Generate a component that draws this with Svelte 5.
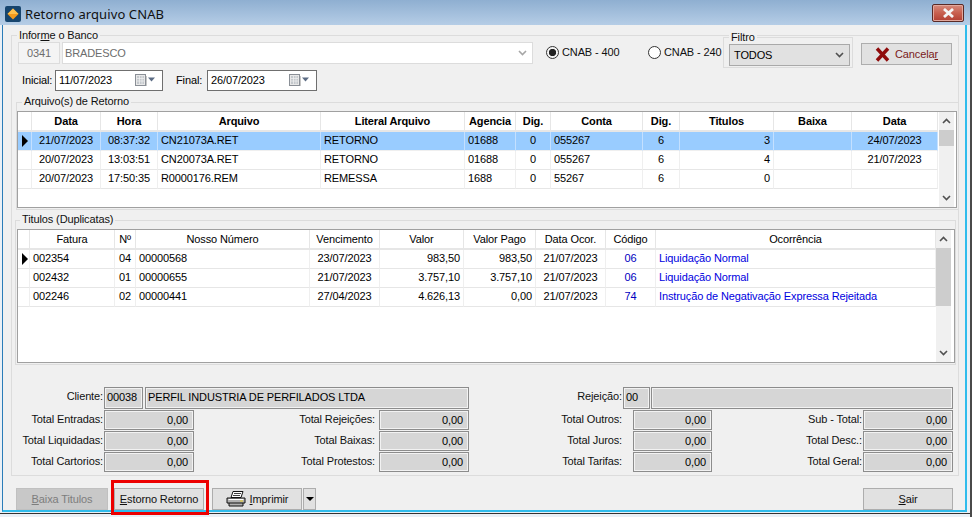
<script>
  const g1cols = [14, 69, 57, 163, 144, 51, 35, 92, 37, 94, 78, 86];
  const g1head = ['', 'Data', 'Hora', 'Arquivo', 'Literal Arquivo', 'Agencia', 'Dig.', 'Conta', 'Dig.', 'Titulos', 'Baixa', 'Data'];
  const g1align = ['', 'c', 'c', 'l', 'l', 'l', 'c', 'l', 'c', 'r', 'l', 'c'];
  const g1rows = [
    ['', '21/07/2023', '08:37:32', 'CN21073A.RET', 'RETORNO', '01688', '0', '055267', '6', '3', '', '24/07/2023'],
    ['', '20/07/2023', '13:03:51', 'CN20073A.RET', 'RETORNO', '01688', '0', '055267', '6', '4', '', '21/07/2023'],
    ['', '20/07/2023', '17:50:35', 'R0000176.REM', 'REMESSA', '1688', '0', '55267', '6', '0', '', '']
  ];
  const g2cols = [12, 85, 21, 174, 70, 84, 72, 70, 50, 280];
  const g2head = ['', 'Fatura', 'Nº', 'Nosso Número', 'Vencimento', 'Valor', 'Valor Pago', 'Data Ocor.', 'Código', 'Ocorrência'];
  const g2align = ['', 'l', 'c', 'l', 'c', 'r', 'r', 'c', 'c', 'o'];
  const g2rows = [
    ['', '002354', '04', '00000568', '23/07/2023', '983,50', '983,50', '21/07/2023', '06', 'Liquidação Normal'],
    ['', '002432', '01', '00000655', '21/07/2023', '3.757,10', '3.757,10', '21/07/2023', '06', 'Liquidação Normal'],
    ['', '002246', '02', '00000441', '27/04/2023', '4.626,13', '0,00', '21/07/2023', '74', 'Instrução de Negativação Expressa Rejeitada']
  ];
  const totals = [
    ['Total Entradas:', 'Total Rejeições:', 'Total Outros:', 'Sub - Total:'],
    ['Total Liquidadas:', 'Total Baixas:', 'Total Juros:', 'Total Desc.:'],
    ['Total Cartorios:', 'Total Protestos:', 'Total Tarifas:', 'Total Geral:']
  ];
</script>

{#snippet chevUp()}
  <svg width="9" height="6" viewBox="0 0 9 6"><path d="M1 5 L4.5 1.5 L8 5" fill="none" stroke="#505050" stroke-width="1.6"/></svg>
{/snippet}
{#snippet chevDown()}
  <svg width="9" height="6" viewBox="0 0 9 6"><path d="M1 1 L4.5 4.5 L8 1" fill="none" stroke="#505050" stroke-width="1.6"/></svg>
{/snippet}
{#snippet calendar()}
  <span class="cal">
    <svg width="26" height="13" viewBox="0 0 26 13">
      <rect x="0.5" y="0.5" width="10" height="11" fill="#e8e8e8" stroke="#8a8f96"/>
      <rect x="2" y="2" width="7" height="8" fill="#c4c8cc"/>
      <path d="M2 4.5H9M2 7H9M4.5 2V10M7 2V10" stroke="#f2f2f2" stroke-width="0.7"/>
      <rect x="11" y="2" width="1" height="10" fill="#c8c8c8"/>
      <path d="M13 3.5H20L16.5 7.5Z" fill="#5c6c84"/>
    </svg>
  </span>
{/snippet}
{#snippet grid(cols, head, align, rows, cls)}
  <table class={cls}>
    <colgroup>
      {#each cols as w}<col style="width:{w}px" />{/each}
    </colgroup>
    <thead>
      <tr>{#each head as h}<th>{h}</th>{/each}</tr>
    </thead>
    <tbody>
      {#each rows as r, i}
        <tr class:sel={i === 0 && cls === 'arq'}>
          {#each r as c, j}
            <td class={align[j]}>
              {#if j === 0 && i === 0}<span class="ptr"></span>{/if}{c}
            </td>
          {/each}
        </tr>
      {/each}
    </tbody>
  </table>
{/snippet}

<div class="win">
  <header class="title">
    <span class="appicon">
      <svg width="16" height="16" viewBox="0 0 16 16">
        <rect width="16" height="16" rx="2" fill="#17456e"/>
        <path d="M8 2.5 L13.5 8 L8 13.5 L2.5 8Z" fill="#f59b1c"/>
        <path d="M8 2.5 L13.5 8 L2.5 8Z" fill="#ffc04d"/>
      </svg>
    </span>
    <span class="ttext">Retorno arquivo CNAB</span>
    <button class="close" aria-label="Fechar">
      <svg width="15" height="10" viewBox="0 0 15 10"><path d="M3 1 L12 9 M12 1 L3 9" stroke="#f4f4f4" stroke-width="2.8"/></svg>
    </button>
  </header>

  <main class="client">
    <section class="outer">
      <div class="legend lg-bank">Infor<u>m</u>e o Banco</div>

      <div class="row-bank">
        <div class="box code">0341</div>
        <div class="box name">BRADESCO<span class="bchev">{@render chevDown()}</span></div>
        <label class="radio r400"><span class="dot on"></span>CNAB - 400</label>
        <label class="radio r240"><span class="dot"></span>CNAB - 240</label>
        <div class="filtro">
          <div class="legend lg-filtro">Filtro</div>
          <div class="select">TODOS{@render chevDown()}</div>
        </div>
        <button class="btn cancel">
          <svg width="15" height="15" viewBox="0 0 15 15"><path d="M2 1.5 L13 13.5 M13 1.5 L2 13.5" stroke="#8f0b0b" stroke-width="3.4"/></svg>
          <span>Cancela<u>r</u></span>
        </button>
      </div>

      <div class="row-dates">
        <span class="dl1">Inicial:</span>
        <div class="date d1">11/07/2023{@render calendar()}</div>
        <span class="dl2">Final:</span>
        <div class="date d2">26/07/2023{@render calendar()}</div>
      </div>

      <section class="group g-arq">
        <div class="legend lg-arq">Arquivo(s) de Retorno</div>
        <div class="gridbox gb1">
          {@render grid(g1cols, g1head, g1align, g1rows, 'arq')}
          <div class="sb">
            <span class="ar">{@render chevUp()}</span>
            <span class="thumb th1"></span>
            <span class="ar down">{@render chevDown()}</span>
          </div>
        </div>
      </section>

      <section class="group g-tit">
        <div class="legend lg-tit">Titulos (Duplicatas)</div>
        <div class="gridbox gb2">
          {@render grid(g2cols, g2head, g2align, g2rows, 'tit')}
          <div class="sb sb2">
            <span class="ar">{@render chevUp()}</span>
            <span class="thumb th2"></span>
            <span class="ar down">{@render chevDown()}</span>
          </div>
        </div>
      </section>

      <div class="summary">
        <div class="sumrow first">
          <span class="lb lb-a">Cliente:</span>
          <div class="fld f-code">00038</div>
          <div class="fld f-name">PERFIL INDUSTRIA DE PERFILADOS LTDA</div>
          <span class="lb lb-rej">Rejeição:</span>
          <div class="fld f-rej">00</div>
          <div class="fld f-rej2"></div>
        </div>
        {#each totals as t}
          <div class="sumrow">
            <span class="lb lb-a">{t[0]}</span>
            <div class="fld val">0,00</div>
            <span class="lb lb-b">{t[1]}</span>
            <div class="fld val">0,00</div>
            <span class="lb lb-c">{t[2]}</span>
            <div class="fld val vc">0,00</div>
            <span class="lb lb-d">{t[3]}</span>
            <div class="fld val">0,00</div>
          </div>
        {/each}
      </div>
    </section>

    <footer class="actions">
      <button class="btn baixa"><span><u>B</u>aixa Titulos</span></button>
      <button class="btn estorno"><span><u>E</u>storno Retorno</span><i class="mark"></i></button>
      <button class="btn imprimir">
        <svg width="20" height="16" viewBox="0 0 20 16">
          <path d="M7 0.5H17L15 6.5H5Z" fill="#fff" stroke="#111"/>
          <path d="M8 2.5H15M7 4.5H14" stroke="#111" stroke-width="0.8"/>
          <path d="M1 7H19V12H17V15H3V12H1Z" fill="#b0b0b0" stroke="#111"/>
          <path d="M2.5 8.5H17.5" stroke="#fff"/>
          <path d="M3 12H17" stroke="#111"/>
          <path d="M14 10H17" stroke="#e8d040" stroke-width="1.2"/>
        </svg>
        <span><u>I</u>mprimir</span>
      </button>
      <button class="btn drop" aria-label="Opções"><svg width="8" height="4" viewBox="0 0 8 4"><path d="M0 0H8L4 4Z" fill="#000"/></svg></button>
      <button class="btn sair"><span><u>S</u>air</span></button>
    </footer>
  </main>
  <div class="edge"></div>
</div>

<style>
  :global(body) { margin: 0; background: #e4e4e4; }
  :global(*) { box-sizing: border-box; }
  .win {
    width: 972px; height: 517px; overflow: hidden;
    font: 11px/13px "Liberation Sans", Arial, sans-serif; color: #000; letter-spacing: -0.12px;
    background: #eaf0f6;
    padding: 0 0 0 2px;
    display: flex; flex-direction: column;
    border-right: 2px solid #4a4a4a;
  }
  .title { height: 25px; flex: none; display: flex; align-items: center; margin: 0 0 0 -2px; padding: 0 6px 0 5px; background: linear-gradient(#8fafd1, #b5cde6); }
  .appicon { display: flex; margin-right: 4px; margin-top: 2px; }
  .ttext { font: 13px/18px "Noto Sans", sans-serif; letter-spacing: 0.1px; color: #111; margin-top: 2px; }
  .close { margin-left: auto; margin-top: 0; width: 32px; height: 18px; padding: 0; border: 1px solid #5a2a26; border-radius: 2px; background: linear-gradient(#d58a7c, #c8604f 50%, #b23f33); display: flex; align-items: center; justify-content: center; box-shadow: inset 0 0 0 1px #e2a89d; }

  .client { width: 965px; height: 487px; flex: none; background: #f0f0f0; border-bottom: 2px solid #2fbcec; border-left: 1px solid #2a7cb8; border-right: 2px solid #2fbcec; padding: 10px 0 0 8px; }
  .edge { height: 1px; margin: 1px 0 0 -2px; background: #333; }

  .outer { height: 441px; width: 948px; border: 1px solid #dcdcdc; }
  .legend { background: #f0f0f0; width: fit-content; padding: 0 2px; color: #111; height: 13px; }
  .lg-bank { margin: -7px 0 0 5px; }
  .row-bank { display: flex; align-items: flex-start; height: 27px; }
  .box { height: 22px; border: 1px solid #dcdcdc; background: #fff; color: #6d6d6d; line-height: 20px; }
  .code { width: 42px; margin-left: 6px; text-align: center; background: #f4f4f4; }
  .name { width: 471px; margin-left: 2px; padding-left: 2px; display: flex; justify-content: space-between; }
  .bchev { display: flex; padding: 7px 5px 0 0; opacity: .5; }
  .radio { display: flex; align-items: center; gap: 3px; margin-top: 3px; height: 14px; color: #111; white-space: nowrap; }
  .r400 { margin-left: 13px; width: 102px; }
  .r240 { width: 75px; }
  .dot { width: 13px; height: 13px; border: 1px solid #333; border-radius: 50%; background: #fff; flex: none; }
  .dot.on { background: radial-gradient(circle, #222 0 3.4px, #f4f4f4 3.9px); }
  .filtro { width: 130px; height: 31px; border: 1px solid #dcdcdc; margin: -5px 0 0 0; padding: 0 0 0 5px; }
  .lg-filtro { margin: -7px 0 0 0; }
  .select { width: 121px; height: 22px; border: 1px solid #a9a9a9; background: #e1e1e1; display: flex; justify-content: space-between; align-items: center; padding: 0 5px 0 4px; }
  .btn { font: inherit; letter-spacing: inherit; color: #111; background: #e1e1e1; border: 1px solid #adadad; padding: 0; display: flex; align-items: center; justify-content: center; height: 22px; }
  .cancel { width: 91px; margin: 1px 0 0 8px; gap: 5px; color: #7a1a1a; }

  .row-dates { display: flex; align-items: center; height: 22px; }
  .dl1 { margin-left: 10px; width: 33px; }
  .dl2 { margin-left: 13px; width: 31px; }
  .date { height: 21px; border: 1px solid #6f6f6f; background: #fff; line-height: 19px; padding: 0 1px 0 3px; display: flex; justify-content: space-between; }
  .d1 { width: 108px; }
  .d2 { width: 110px; }
  .cal { padding: 3px 0 0 0; }

  .group { border: 1px solid #dcdcdc; }
  .g-arq { margin: 11px 0 0 4px; width: 943px; height: 108px; }
  .lg-arq { margin: -8px 0 0 5px; }
  .g-tit { margin: 10px 0 0 3px; width: 941px; height: 145px; }
  .lg-tit { margin: -8px 0 0 4px; }
  .gridbox { background: #fff; border: 1px solid #a0a0a0; display: flex; overflow: hidden; }
  .gb1 { width: 940px; height: 97px; margin: 3px 0 0 0; }
  .gb2 { width: 938px; height: 134px; margin: 3px 0 0 1px; }
  table { border-collapse: separate; border-spacing: 0; table-layout: fixed; flex: none; align-self: flex-start; }
  .arq { width: 920px; }
  .tit { width: 918px; }
  th { height: 20px; padding: 0; font-weight: 700; text-align: center; border-right: 1px solid #e6e6e6; border-bottom: 2px solid #e6e6e6; overflow: hidden; white-space: nowrap; }
  .tit th { font-weight: 400; }
  td { height: 19px; padding: 0 3px; border-right: 1px solid #efefef; border-bottom: 1px solid #e6e6e6; overflow: hidden; white-space: nowrap; line-height: 16px; vertical-align: top; position: relative; }
  .c { text-align: center; }
  .r { text-align: right; }
  .l { text-align: left; }
  .o { text-align: left; color: #0000e0; }
  .tit td:nth-child(9) { color: #0000c0; }
  .sel td { background: #99ccff; border-bottom-color: #efefef; border-right-color: #c4e0ff; }
  .ptr { position: absolute; left: 4px; top: 3px; width: 0; height: 0; border-left: 6px solid #000; border-top: 6px solid transparent; border-bottom: 6px solid transparent; }
  .sb { width: 15px; margin-left: auto; margin-right: 2px; background: #f0f0f0; display: flex; flex-direction: column; }
  .sb2 { margin-right: 3px; }
  .ar { height: 18px; display: flex; align-items: center; justify-content: center; flex: none; }
  .down { margin-top: auto; }
  .thumb { background: #cdcdcd; flex: none; }
  .th1 { height: 16px; }
  .th2 { height: 58px; }

  .summary { margin-top: 22px; }
  .sumrow { display: flex; height: 20px; margin-bottom: 1px; }
  .sumrow.first { height: 22px; margin-bottom: 1px; }
  .lb { text-align: right; line-height: 18px; color: #111; white-space: nowrap; padding-right: 1px; }
  .lb-a { width: 92px; }
  .lb-b { width: 185px; padding-right: 4px; }
  .lb-c { width: 164px; padding-right: 11px; }
  .lb-d { width: 151px; }
  .lb-rej { width: 154px; }
  .fld { background: #d6d6d6; border: 1px solid #8c8c8c; box-shadow: inset 0 0 0 1px #f2f2f2; line-height: 19px; padding: 0 2px; white-space: nowrap; }
  .f-code { width: 39px; }
  .f-name { width: 324px; margin-left: 2px; }
  .f-rej { width: 27px; }
  .f-rej2 { width: 302px; margin-left: 1px; }
  .val { width: 90px; text-align: right; line-height: 19px; padding-right: 5px; }
  .vc { width: 79px; }

  .actions { display: flex; margin-top: 12px; height: 22px; }
  .baixa { width: 92px; margin-left: 5px; background: #c8c8c8; color: #7d7d7d; border-color: #c0c0c0; }
  .estorno { width: 90px; margin-left: 6px; position: relative; overflow: visible; }
  .mark { position: absolute; left: -4px; top: -9px; width: 98px; height: 35px; border: 3px solid #ec0000; pointer-events: none; }
  .imprimir { width: 90px; margin-left: 8px; gap: 4px; }
  .drop { width: 13px; margin-left: 1px; }
  .sair { width: 90px; margin-left: 547px; }
</style>
